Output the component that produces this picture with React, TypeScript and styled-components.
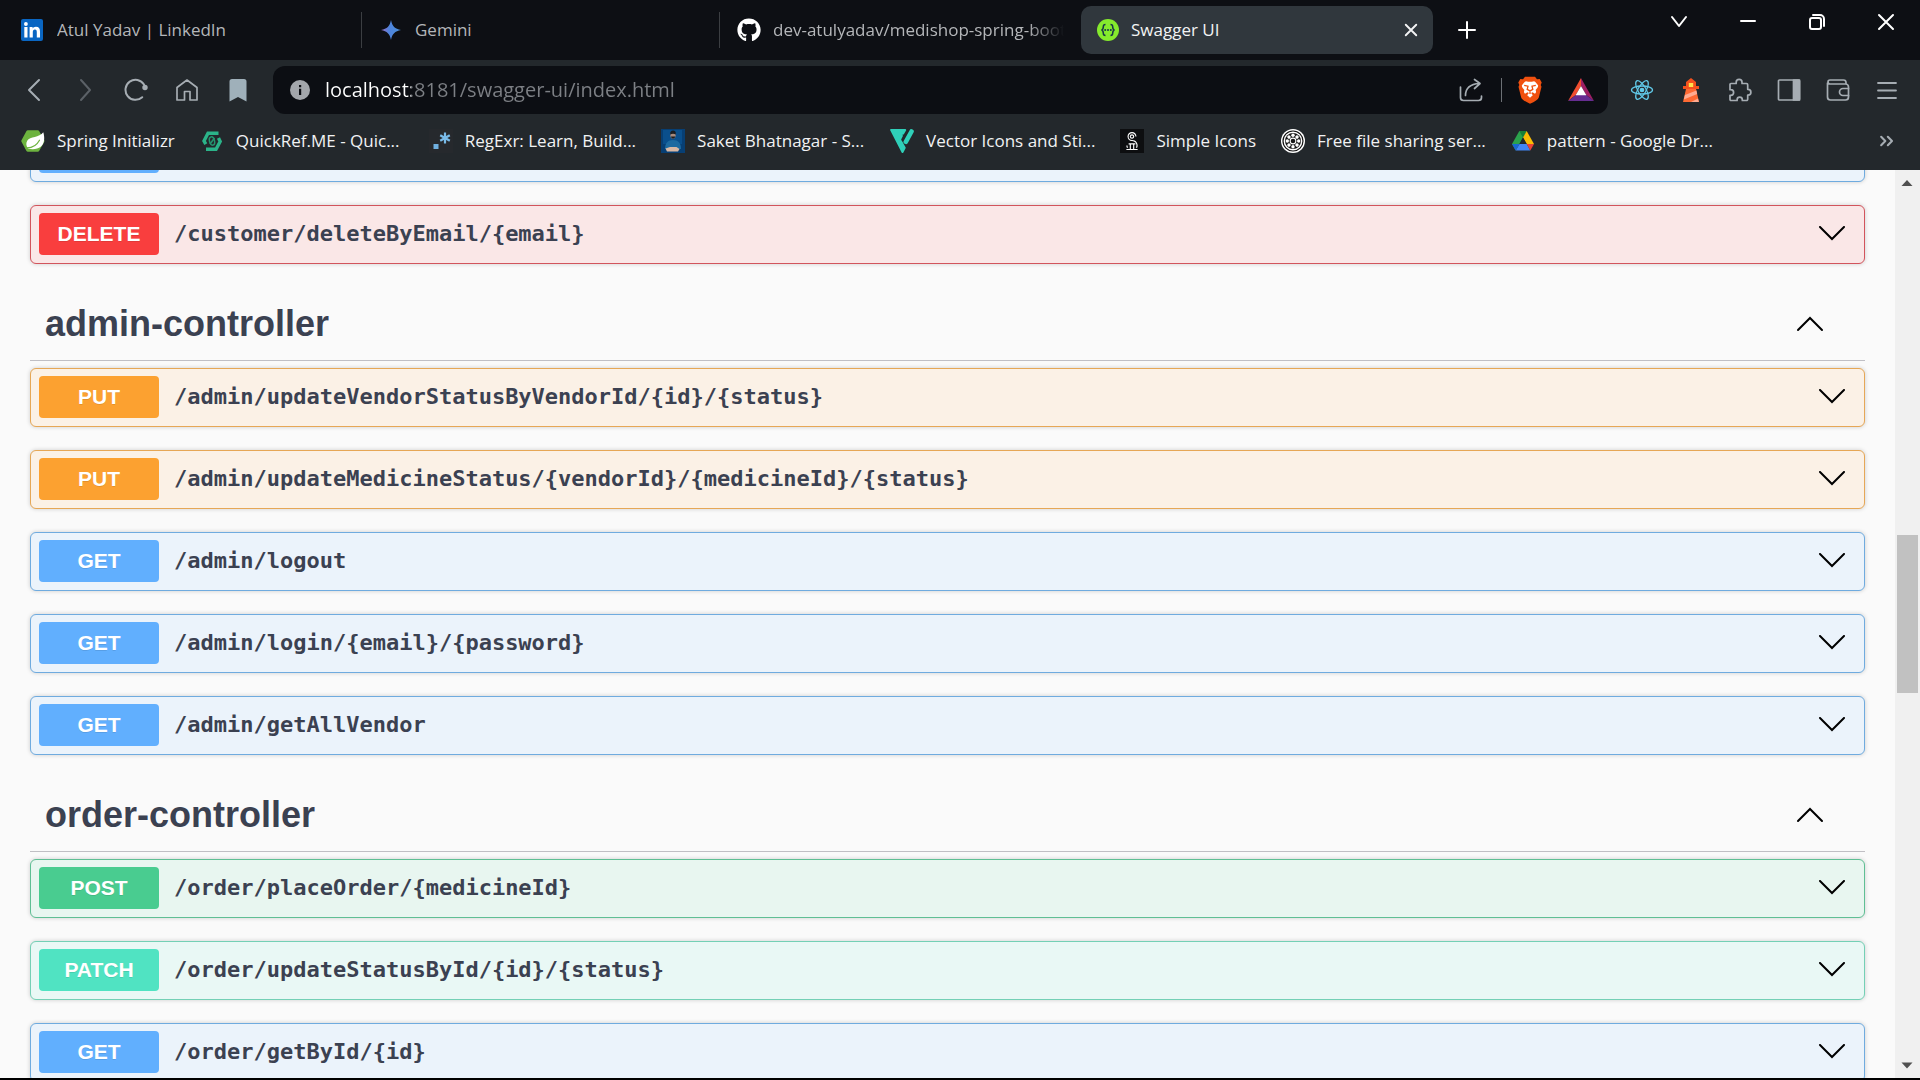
import React from "react";
import styled, { createGlobalStyle, css } from "styled-components";
import { FaGithub } from "react-icons/fa";
import { SiBrave, SiSimpleicons, SiSwagger } from "react-icons/si";

const UI_FONT = `"Open Sans", "Noto Sans", sans-serif`;

const GlobalStyle = createGlobalStyle`
  * { box-sizing: border-box; }
  body { margin: 0; background: #000; overflow: hidden; }
  button { font: inherit; color: inherit; background: none; border: 0; padding: 0; margin: 0; cursor: pointer; }
  svg { display: block; flex: none; }
`;

const Shell = styled.div`
  display: flex;
  flex-direction: column;
  height: 100vh;
  padding-bottom: 2px;
  background: #000;
  font-family: ${UI_FONT};
  font-size: 17px;
`;

/* ---------- tab strip ---------- */

const TabStrip = styled.header`
  display: flex;
  flex: none;
  align-items: center;
  height: 60px;
  padding-left: 3px;
  background: #0d0f14;
  color: #fff;
`;

const TabList = styled.div`
  display: flex;
  align-items: center;
  min-width: 0;
`;

const Tab = styled.div<{ $active?: boolean; $divider?: boolean }>`
  display: flex;
  align-items: center;
  flex: 0 1 358px;
  min-width: 0;
  height: 36px;
  padding: 0 13px 0 18px;
  color: #b4b6b9;
  ${(p) =>
    p.$divider &&
    css`
      padding-left: 17px;
      border-left: 1px solid #3b3e42;
    `}
  ${(p) =>
    p.$active &&
    css`
      flex-basis: 352px;
      height: 48px;
      margin: 0 2px 0 4px;
      padding: 0 10px 0 14px;
      border-radius: 10px;
      background: #30373d;
      color: #f2f3f4;
    `}
`;

const TabButton = styled.button`
  display: flex;
  flex: 1;
  align-items: center;
  gap: 12px;
  width: 358px;
  min-width: 0;
  text-align: left;
`;

const TabTitle = styled.span<{ $fade?: boolean }>`
  flex: 1;
  overflow: hidden;
  line-height: 24px;
  white-space: nowrap;
  ${(p) =>
    p.$fade &&
    css`
      mask-image: linear-gradient(90deg, #000 calc(100% - 36px), transparent);
    `}
`;

const IconButton = styled.button<{ $w?: number; $h?: number }>`
  display: flex;
  flex: none;
  align-items: center;
  justify-content: center;
  width: ${(p) => p.$w ?? 24}px;
  height: ${(p) => p.$h ?? 24}px;
`;

const WindowControls = styled.div`
  display: flex;
  align-self: flex-start;
  margin-left: auto;
`;

/* ---------- toolbar ---------- */

const Toolbar = styled.nav`
  display: flex;
  flex: none;
  align-items: center;
  height: 60px;
  padding: 0 9px 0 8px;
  background: #23282c;
  color: #a6adb3;
`;

const AddressBar = styled.form`
  display: flex;
  flex: 1;
  align-items: center;
  min-width: 0;
  height: 48px;
  margin: 0 9px 0 10px;
  padding: 0 2px;
  border-radius: 12px;
  background: #0c0e13;
`;

const AddressInput = styled.input`
  flex: 1;
  min-width: 0;
  height: 32px;
  padding: 0;
  border: 0;
  outline: 0;
  font-family: ${UI_FONT};
  font-size: 20px;
  line-height: 32px;
  background: linear-gradient(90deg, #fff 86px, #7d8085 86px);
  background-clip: text;
  color: transparent;
`;

const AddressDivider = styled.span`
  width: 1px;
  height: 24px;
  margin: 0 2px;
  background: #6c7075;
`;

/* ---------- bookmarks ---------- */

const BookmarkBar = styled.nav`
  display: flex;
  flex: none;
  align-items: center;
  gap: 25px;
  height: 50px;
  padding: 0 21px 8px;
  background: #23282c;
  color: #f1f2f3;
`;

const Bookmark = styled.a`
  display: flex;
  flex: none;
  align-items: center;
  gap: 12px;
  color: inherit;
  line-height: 24px;
  text-decoration: none;
  white-space: nowrap;
`;

const BookmarkText = styled.span<{ $long?: boolean }>`
  min-width: ${(p) => (p.$long ? "168px" : "0")};
`;

const MoreBookmarks = styled(IconButton)`
  margin-left: auto;
  color: #a6adb3;
`;

/* ---------- page ---------- */

const Viewport = styled.div`
  display: flex;
  flex: 1;
  min-height: 0;
  overflow: hidden;
  background: #fafafa;
`;

const Page = styled.main`
  flex: 1;
  min-width: 0;
  margin-top: -47px;
  padding: 0 30px;
  color: #3b4151;
`;

const SectionHead = styled.h3`
  display: flex;
  margin: 0 0 7px;
  border-bottom: 1px solid #c0bfc4;
  font-family: "Liberation Sans", Arial, sans-serif;
  font-size: 36px;
  font-weight: 700;
  line-height: 40px;
`;

const SectionToggle = styled.button`
  display: flex;
  flex: 1;
  align-items: center;
  justify-content: space-between;
  height: 73px;
  padding: 0 41px 0 15px;
`;

type Method = "GET" | "PUT" | "POST" | "PATCH" | "DELETE";

const PALETTE: Record<Method, { solid: string; tint: string; line: string }> = {
  GET: { solid: "#61affe", tint: "#ebf3fb", line: "#6fabdf" },
  PUT: { solid: "#fca130", tint: "#fbf1e6", line: "#e6a756" },
  POST: { solid: "#49cc90", tint: "#e8f6f0", line: "#5fbf94" },
  PATCH: { solid: "#50e3c2", tint: "#e9f8f5", line: "#74d0b5" },
  DELETE: { solid: "#f93e3e", tint: "#fae7e7", line: "#d2545c" },
};

const Operation = styled.button<{ $method: Method }>`
  display: flex;
  align-items: center;
  width: 100%;
  height: 59px;
  margin-bottom: 23px;
  padding: 0 18px 2px 8px;
  border: 1px solid ${(p) => PALETTE[p.$method].line};
  border-radius: 6px;
  background: ${(p) => PALETTE[p.$method].tint};
  box-shadow: 0 0 4px rgba(0, 0, 0, 0.19);
  color: #3b4151;
  text-align: left;
`;

const MethodBadge = styled.span<{ $method: Method }>`
  flex: none;
  width: 120px;
  border-radius: 4px;
  background: ${(p) => PALETTE[p.$method].solid};
  color: #fff;
  font-family: "Liberation Sans", Arial, sans-serif;
  font-size: 21px;
  font-weight: 700;
  line-height: 42px;
  text-align: center;
  text-shadow: 0 1px 0 rgba(0, 0, 0, 0.1);
`;

const Path = styled.span`
  flex: 1;
  padding: 0 15px;
  font-family: "DejaVu Sans Mono", "Liberation Mono", monospace;
  font-size: 22px;
  font-weight: 700;
  line-height: 28px;
`;

/* ---------- scrollbar ---------- */

const Scrollbar = styled.div`
  display: flex;
  flex: none;
  flex-direction: column;
  align-items: center;
  width: 25px;
  background: #f0f0f0;
`;

const ScrollGap = styled.div<{ $grow: number }>`
  flex: ${(p) => p.$grow} 1 0;
`;

const ScrollThumb = styled.div`
  flex: 158 1 0;
  width: 21px;
  background: #c1c1c1;
`;

/* ---------- icons ---------- */

type LineProps = { children: React.ReactNode; size?: number; w?: number; color?: string };
const Line = ({ children, size = 24, w = 2, color = "currentColor" }: LineProps) => (
  <svg width={size} height={size} viewBox="0 0 24 24" fill="none" stroke={color} strokeWidth={w} strokeLinecap="round" strokeLinejoin="round" aria-hidden>
    {children}
  </svg>
);

const Chevron = ({ up }: { up?: boolean }) => (
  <svg width="28" height="16" viewBox="0 0 28 16" fill="none" stroke="#000" strokeWidth="2" strokeLinecap="round" aria-hidden>
    <path d={up ? "M2 14 14 2 26 14" : "M2 1 14 13 26 1"} />
  </svg>
);

const LinkedInIcon = () => (
  <svg width="24" height="24" viewBox="0 0 24 24" aria-hidden>
    <rect x="0" y="1" width="22" height="22" rx="2" fill="#0a66c2" />
    <g fill="#fff">
      <circle cx="4.9" cy="6" r="1.9" />
      <path d="M3.3 9h3.2v10.500H3.300zM8.600 9h3v1.500c.6-1 1.700-1.800 3.300-1.800 3 0 4.100 1.900 4.100 4.800v6h-3.200v-5.300c0-1.500-.4-2.600-1.900-2.600-1.400 0-2.100 1-2.100 2.600v5.300H8.600z" />
    </g>
  </svg>
);

const GeminiIcon = () => (
  <svg width="24" height="24" viewBox="0 0 24 24" aria-hidden>
    <defs>
      <linearGradient id="gem" x1="0" x2="1">
        <stop offset="0" stopColor="#9a6fc4" />
        <stop offset=".4" stopColor="#4f83dd" />
        <stop offset="1" stopColor="#4a90d9" />
      </linearGradient>
    </defs>
    <path fill="url(#gem)" d="M12 2c1 6 4 9 10 10-6 1-9 4-10 10-1-6-4-9-10-10 6-1 9-4 10-10z" />
  </svg>
);

const SwaggerIcon = () => (
  <svg width="24" height="24" viewBox="0 0 24 24" aria-hidden>
    <circle cx="13" cy="12" r="11" fill="#85ea2d" />
    <g fill="none" stroke="#173647" strokeWidth="1.500">
      <path d="M10.500 6.500c-2 0-2.200.8-2.200 2.200 0 2-.2 3-1.800 3.300 1.600.3 1.800 1.300 1.800 3.300 0 1.400.2 2.200 2.200 2.200" />
      <path d="M15.500 6.500c2 0 2.200.8 2.200 2.200 0 2 .2 3 1.800 3.300-1.600.3-1.800 1.300-1.800 3.300 0 1.400-.2 2.200-2.200 2.200" />
    </g>
    <g fill="#173647">
      <circle cx="10.200" cy="12" r="1" />
      <circle cx="13" cy="12" r="1" />
      <circle cx="15.800" cy="12" r="1" />
    </g>
  </svg>
);

const SpringIcon = () => (
  <svg width="24" height="24" viewBox="0 0 24 24" aria-hidden>
    <path fill="#6db33f" stroke="#6db33f" strokeWidth="3" strokeLinejoin="round" d="M6.800 2.800h10L22 12l-5.200 9.300H6.800L1.800 12z" />
    <path fill="#fff" d="M22.300 3.200c1.600 5.600 1.300 11-2.300 14.200-3.600 3-9 3.300-13 2-1.800-2-2.300-5.200-.8-7.700C9 7.200 18.300 8.700 22.300 3.200z" />
    <path fill="none" stroke="#6db33f" strokeWidth="1.200" strokeLinecap="round" d="M5.500 18.800c6 .2 10.300-2.600 13-7.600" />
    <circle cx="5.200" cy="18.800" r="1.100" fill="#6db33f" />
  </svg>
);

const QuickRefIcon = () => (
  <svg width="24" height="24" viewBox="0 0 24 24" fill="none" aria-hidden>
    <g stroke="#2bb389" strokeWidth="3.400">
      <path d="M18.500 4.300H8L4 12l1.800 3.200" />
      <path d="M6 20.200h10L20.200 12.500 18.500 9" />
    </g>
    <g stroke="#23946f" strokeWidth="1.500">
      <ellipse cx="12" cy="12" rx="2.500" ry="4.200" transform="rotate(-15 12 12)" />
      <path d="m10 15 4.500-6" />
    </g>
  </svg>
);

const RegExrIcon = () => (
  <svg width="24" height="24" viewBox="0 0 24 24" aria-hidden>
    <rect width="24" height="24" fill="#26292d" />
    <rect x="4.500" y="15" width="5" height="5" fill="#70b0e0" />
    <path stroke="#79bbe9" strokeWidth="2.200" d="M16 3.500v11M11.200 6.200l9.600 5.600M20.800 6.200l-9.600 5.600" />
  </svg>
);

const PortraitIcon = () => (
  <svg width="24" height="24" viewBox="0 0 24 24" aria-hidden>
    <rect width="24" height="24" fill="#073f74" />
    <rect x="2" y="1" width="19" height="14" fill="#0a4f8c" />
    <path fill="#1d6aa0" d="M4 20c0-6 3-9 8-9s8 3 8 9z" />
    <ellipse cx="12" cy="6.200" rx="2.600" ry="3.400" fill="#a98b7d" />
    <path fill="#1b1e22" d="M9.200 5.600c-.2-3 1-4 2.900-4s3 1 2.700 4c-1.500-1.300-4-1.300-5.600 0zM10 7.500h4.200c0 2.600-4 2.800-4.200 0z" />
    <path fill="#d9b9a5" d="M4.500 19.500 9 18h6.500l3 2-1.500 2.600H6z" />
  </svg>
);

const FlaticonIcon = () => (
  <svg width="24" height="24" viewBox="0 0 24 24" aria-hidden>
    <path fill="#2fd0b9" stroke="#2fd0b9" strokeWidth="2" strokeLinejoin="round" d="M1.200 1h14l-2.200 3.800H8l1.200 2h2.700L10 10.500l4.700 8.200-2.200 4.300z" />
    <path fill="none" stroke="#2fd0b9" strokeWidth="4.600" strokeLinecap="round" d="M21.500 2.500 15.800 12.800" />
    <path fill="none" stroke="#23282c" strokeWidth="1.300" d="m18.200 1-6 11" />
  </svg>
);

const SimpleIcon = () => (
  <svg width="24" height="24" viewBox="0 0 24 24" aria-hidden>
    <rect width="24" height="24" fill="#0d0e10" />
    <svg x="3" y="3" width="18" height="18" viewBox="0 0 24 24">
      <SiSimpleicons color="#fff" size={24} />
    </svg>
  </svg>
);

const ReelIcon = () => (
  <svg width="24" height="24" viewBox="0 0 24 24" aria-hidden>
    <circle cx="12" cy="12" r="12" fill="#fff" />
    <circle cx="12" cy="12" r="10" fill="none" stroke="#111" strokeWidth="1.200" />
    <circle cx="12" cy="12" r="8" fill="#161616" />
    {[0, 45, 90, 135, 180, 225, 270, 315].map((a) => (
      <circle key={a} cx="12" cy="6.300" r="1.700" fill="#fff" transform={`rotate(${a} 12 12)`} />
    ))}
    <circle cx="12" cy="12" r="3.400" fill="#fff" />
    <circle cx="12" cy="12" r="2.300" fill="#161616" />
  </svg>
);

const DriveIcon = () => (
  <svg width="24" height="24" viewBox="0 0 24 24" aria-hidden>
    <path fill="#2ba24c" d="M8.300 2h7.400L4.700 21.500 1 15z" />
    <path fill="#188038" d="M8.300 2h7.400L12 8.500z" />
    <path fill="#fbbc04" d="M15.700 2 23 15h-7.300L12 8.500z" />
    <path fill="#4285f4" d="M8.500 15h7.200l3.600 6.500H4.700z" />
    <path fill="#1967d2" d="M1 15h7.500l-3.800 6.500z" />
    <path fill="#ea4335" d="M15.700 15H23l-3.700 6.500z" />
    <path fill="#23282c" d="m12 8.500 3.700 6.500H8.500z" />
  </svg>
);

const BraveIcon = () => (
  <svg width="28" height="28" viewBox="0 0 28 28" aria-hidden>
    <path fill="#f0500f" d="M9 .8h10l2 2.400 2.700-.2 2 3.600-1 2.400.8 1.800-2.600 10.400c-.6 2.200-4 4.400-8.900 6.500-4.900-2.100-8.300-4.300-8.900-6.500L2.500 10.800 3.300 9l-1-2.400 2-3.600 2.700.2z" />
    <path fill="#fff" d="M10 5.200c1.600.4 2.700.5 4 .5s2.400-.1 4-.5c1.500.5 3 2.400 4.200 4.400-.1 1.700-1 2.900-2.600 4.500.8 1.700.5 2.500-.6 3.600l-2.500-1.500-1.300.9 1.600 2.200L14 21.800l-2.800-2.500 1.600-2.200-1.300-.9L9 17.700c-1.100-1.100-1.400-1.900-.6-3.600-1.600-1.600-2.500-2.800-2.600-4.500C7 7.600 8.500 5.700 10 5.200z" />
    <path fill="none" stroke="#f0500f" strokeWidth="1.300" d="m8.200 9.300 3.800.9-.8 3.200 2.800 1.500 2.800-1.500-.8-3.200 3.800-.9M14 15v3" />
  </svg>
);

const BatIcon = () => (
  <svg width="28" height="28" viewBox="0 0 28 28" aria-hidden>
    <path fill="#f04e30" d="M14 2v8L8.800 19 1 25z" />
    <path fill="#9e1f63" d="M14 2v8l5.200 9 7.800 6z" />
    <path fill="#662d91" d="M1 25h26l-7.800-6H8.800z" />
    <path fill="#fff" d="m14 10 5.400 9.300H8.600z" />
  </svg>
);

const ReactIcon = () => (
  <svg width="24" height="24" viewBox="0 0 24 24" fill="none" stroke="#61c9e8" strokeWidth="1.300" aria-hidden>
    <ellipse cx="12" cy="12" rx="10.500" ry="4" />
    <ellipse cx="12" cy="12" rx="10.500" ry="4" transform="rotate(60 12 12)" />
    <ellipse cx="12" cy="12" rx="10.500" ry="4" transform="rotate(120 12 12)" />
    <circle cx="12" cy="12" r="1.700" fill="#61c9e8" />
  </svg>
);

const LighthouseIcon = () => (
  <svg width="24" height="26" viewBox="0 0 24 26" aria-hidden>
    <path fill="#f4511e" d="M12 1 17 5v4h3v3H4V9h3V5z" />
    <rect x="9.800" y="6" width="4.400" height="4" fill="#ffe14d" />
    <path fill="#ff6a33" d="M7 12h10l3 13H4z" />
    <path fill="#ffab91" d="m6 18 11.400-4.500.8 3.600L4.800 22.500zM12 25l7-3.400.8 3.400z" />
  </svg>
);

const ReloadIcon = () => (
  <svg width="24" height="24" viewBox="0 0 24 24" fill="none" stroke="#a6adb3" strokeWidth="2" strokeLinecap="round" aria-hidden>
    <path d="M18.200 19.200A10 10 0 1 1 20 6.500" />
    <circle cx="21" cy="9.500" r="2.700" fill="#a6adb3" stroke="none" />
  </svg>
);

const InfoIcon = () => (
  <svg width="20" height="20" viewBox="0 0 20 20" aria-hidden>
    <circle cx="10" cy="10" r="10" fill="#a3a6ab" />
    <path fill="#0c0e13" d="M9 5h2.200v2.200H9zM9 8.700h2.200V15H9z" />
  </svg>
);

const ScrollArrow = ({ down }: { down?: boolean }) => (
  <svg width="25" height="25" viewBox="0 0 25 25" aria-hidden>
    <path fill="#505050" d={down ? "M6.500 9.500h11L12 15.500z" : "M6.500 16h11L12 10z"} />
  </svg>
);

/* ---------- data ---------- */

const bookmarks: { text: string; long?: boolean; icon: React.ReactNode }[] = [
  { text: "Spring Initializr", icon: <SpringIcon /> },
  { text: "QuickRef.ME - Quic...", long: true, icon: <QuickRefIcon /> },
  { text: "RegExr: Learn, Build...", long: true, icon: <RegExrIcon /> },
  { text: "Saket Bhatnagar - S...", long: true, icon: <PortraitIcon /> },
  { text: "Vector Icons and Sti...", long: true, icon: <FlaticonIcon /> },
  { text: "Simple Icons", icon: <SimpleIcon /> },
  { text: "Free file sharing ser...", long: true, icon: <ReelIcon /> },
  { text: "pattern - Google Dr...", long: true, icon: <DriveIcon /> },
];

const customerOps: [Method, string][] = [
  ["GET", "/customer/getByEmail/{email}"],
  ["DELETE", "/customer/deleteByEmail/{email}"],
];

const adminOps: [Method, string][] = [
  ["PUT", "/admin/updateVendorStatusByVendorId/{id}/{status}"],
  ["PUT", "/admin/updateMedicineStatus/{vendorId}/{medicineId}/{status}"],
  ["GET", "/admin/logout"],
  ["GET", "/admin/login/{email}/{password}"],
  ["GET", "/admin/getAllVendor"],
];

const orderOps: [Method, string][] = [
  ["POST", "/order/placeOrder/{medicineId}"],
  ["PATCH", "/order/updateStatusById/{id}/{status}"],
  ["GET", "/order/getById/{id}"],
];

const Section = ({ name, ops }: { name?: string; ops: [Method, string][] }) => (
  <section>
    {name && (
      <SectionHead>
        <SectionToggle aria-expanded>
          {name}
          <Chevron up />
        </SectionToggle>
      </SectionHead>
    )}
    {ops.map(([method, path]) => (
      <Operation key={path} $method={method} aria-expanded={false}>
        <MethodBadge $method={method}>{method}</MethodBadge>
        <Path>{path}</Path>
        <Chevron />
      </Operation>
    ))}
  </section>
);

export default function App() {
  return (
    <Shell>
      <GlobalStyle />
      <TabStrip>
        <TabList>
          <Tab>
            <TabButton>
              <LinkedInIcon />
              <TabTitle>Atul Yadav | LinkedIn</TabTitle>
            </TabButton>
          </Tab>
          <Tab $divider>
            <TabButton>
              <GeminiIcon />
              <TabTitle>Gemini</TabTitle>
            </TabButton>
          </Tab>
          <Tab $divider>
            <TabButton>
              <FaGithub size={24} color="#fff" />
              <TabTitle $fade>dev-atulyadav/medishop-spring-boot</TabTitle>
            </TabButton>
          </Tab>
          <Tab $active>
            <TabButton aria-current="page">
              <SwaggerIcon />
              <TabTitle>Swagger UI</TabTitle>
            </TabButton>
            <IconButton aria-label="Close tab">
              <Line size={18} w={2.5}>
                <path d="m5 5 14 14M19 5 5 19" />
              </Line>
            </IconButton>
          </Tab>
        </TabList>
        <IconButton $w={64} $h={48} aria-label="New tab">
          <Line>
            <path d="M12 4v16M4 12h16" />
          </Line>
        </IconButton>
        <WindowControls>
          <IconButton $w={69} $h={44} aria-label="Search tabs">
            <Line>
              <path d="m5 7 7 9 7-9" />
            </Line>
          </IconButton>
          <IconButton $w={69} $h={44} aria-label="Minimize">
            <Line>
              <path d="M5 11h14" />
            </Line>
          </IconButton>
          <IconButton $w={69} $h={44} aria-label="Restore">
            <Line>
              <rect x="5" y="8" width="11" height="11" rx="2" />
              <path d="M8 5h7a4 4 0 0 1 4 4v7" />
            </Line>
          </IconButton>
          <IconButton $w={69} $h={44} aria-label="Close window">
            <Line>
              <path d="m5 5 14 14M19 5 5 19" />
            </Line>
          </IconButton>
        </WindowControls>
      </TabStrip>

      <Toolbar>
        <IconButton $w={51} $h={48} aria-label="Back">
          <Line>
            <path d="m17 2-10 10 10 10" />
          </Line>
        </IconButton>
        <IconButton $w={51} $h={48} aria-label="Forward">
          <Line color="#5b6167">
            <path d="m8 2 9 10-9 10" />
          </Line>
        </IconButton>
        <IconButton $w={51} $h={48} aria-label="Reload">
          <ReloadIcon />
        </IconButton>
        <IconButton $w={51} $h={48} aria-label="Home">
          <Line w={1.7}>
            <path d="M2 9.500 12 2l10 7.500V22h-7v-8.500H9.500V22H2z" />
          </Line>
        </IconButton>
        <IconButton $w={51} $h={48} aria-label="Bookmark this page">
          <svg width="24" height="24" viewBox="0 0 24 24" aria-hidden>
            <path fill="#9fb0ba" d="M6 1h12a2.500 2.500 0 0 1 2.500 2.500V23.500L12 19l-8.500 4.500v-20A2.500 2.500 0 0 1 6 1z" />
          </svg>
        </IconButton>
        <AddressBar onSubmit={(e) => e.preventDefault()}>
          <IconButton type="button" $w={50} $h={48} aria-label="Site information">
            <InfoIcon />
          </IconButton>
          <AddressInput aria-label="Address" defaultValue="localhost:8181/swagger-ui/index.html" spellCheck={false} />
          <IconButton type="button" $w={56} $h={48} aria-label="Share">
            <Line w={1.700}>
              <path d="M1.500 9v10.500a3 3 0 0 0 3 3h15a3 3 0 0 0 3-3V18" />
              <path d="M6.500 17.500c0-7 4.500-11.500 14-12M15.500 1.500l5.500 4-5.500 5" />
            </Line>
          </IconButton>
          <AddressDivider />
          <IconButton type="button" $w={52} $h={48} aria-label="Brave Shields">
            <BraveIcon />
          </IconButton>
          <IconButton type="button" $w={50} $h={48} aria-label="Brave Rewards">
            <BatIcon />
          </IconButton>
        </AddressBar>
        <IconButton $w={49} $h={48} aria-label="React Developer Tools">
          <ReactIcon />
        </IconButton>
        <IconButton $w={49} $h={48} aria-label="Lighthouse">
          <LighthouseIcon />
        </IconButton>
        <IconButton $w={49} $h={48} aria-label="Extensions">
          <Line w={1.700}>
            <path d="M3 5.500h5.200V4.300a2.900 2.900 0 0 1 5.800 0v1.200h4.500a1.200 1.200 0 0 1 1.200 1.200v4.600h.3a2.900 2.900 0 0 1 0 5.800h-.3v4.200a1.200 1.200 0 0 1-1.200 1.200h-4.200v-.8a2.600 2.600 0 0 0-5.200 0v.8H3.200A1.200 1.200 0 0 1 2 21.100v-3.800h.8a2.800 2.800 0 0 0 0-5.600H2V6.500a1 1 0 0 1 1-1z" />
          </Line>
        </IconButton>
        <IconButton $w={49} $h={48} aria-label="Sidebar">
          <Line w={1.700}>
            <rect x="1.500" y="2" width="21" height="20" rx="1" />
            <path fill="currentColor" d="M16.500 2h6v20h-6z" />
          </Line>
        </IconButton>
        <IconButton $w={49} $h={48} aria-label="Wallet">
          <Line w={1.700}>
            <path d="M1.500 5v14a3 3 0 0 0 3 3h15a3 3 0 0 0 3-3V9a3 3 0 0 0-3-3H4a2 2 0 0 1 0-4h13.500a2.500 2.500 0 0 1 2.500 2.500V6" />
            <path d="M22.500 10.500H17a3.500 3.500 0 0 0 0 7h5.500" />
          </Line>
        </IconButton>
        <IconButton $w={49} $h={48} aria-label="Menu">
          <Line w={1.800}>
            <path d="M3 5h18M3 12.500h18M3 20h18" />
          </Line>
        </IconButton>
      </Toolbar>

      <BookmarkBar>
        {bookmarks.map((b) => (
          <Bookmark key={b.text} href="#">
            {b.icon}
            <BookmarkText $long={b.long}>{b.text}</BookmarkText>
          </Bookmark>
        ))}
        <MoreBookmarks aria-label="More bookmarks">
          <Line size={20} w={2.500}>
            <path d="m5 7 5 5-5 5M13 7l5 5-5 5" />
          </Line>
        </MoreBookmarks>
      </BookmarkBar>

      <Viewport>
        <Page>
          <Section ops={customerOps} />
          <Section name="admin-controller" ops={adminOps} />
          <Section name="order-controller" ops={orderOps} />
        </Page>
        <Scrollbar aria-hidden>
          <ScrollArrow />
          <ScrollGap $grow={340} />
          <ScrollThumb />
          <ScrollGap $grow={360} />
          <ScrollArrow down />
        </Scrollbar>
      </Viewport>
    </Shell>
  );
}
